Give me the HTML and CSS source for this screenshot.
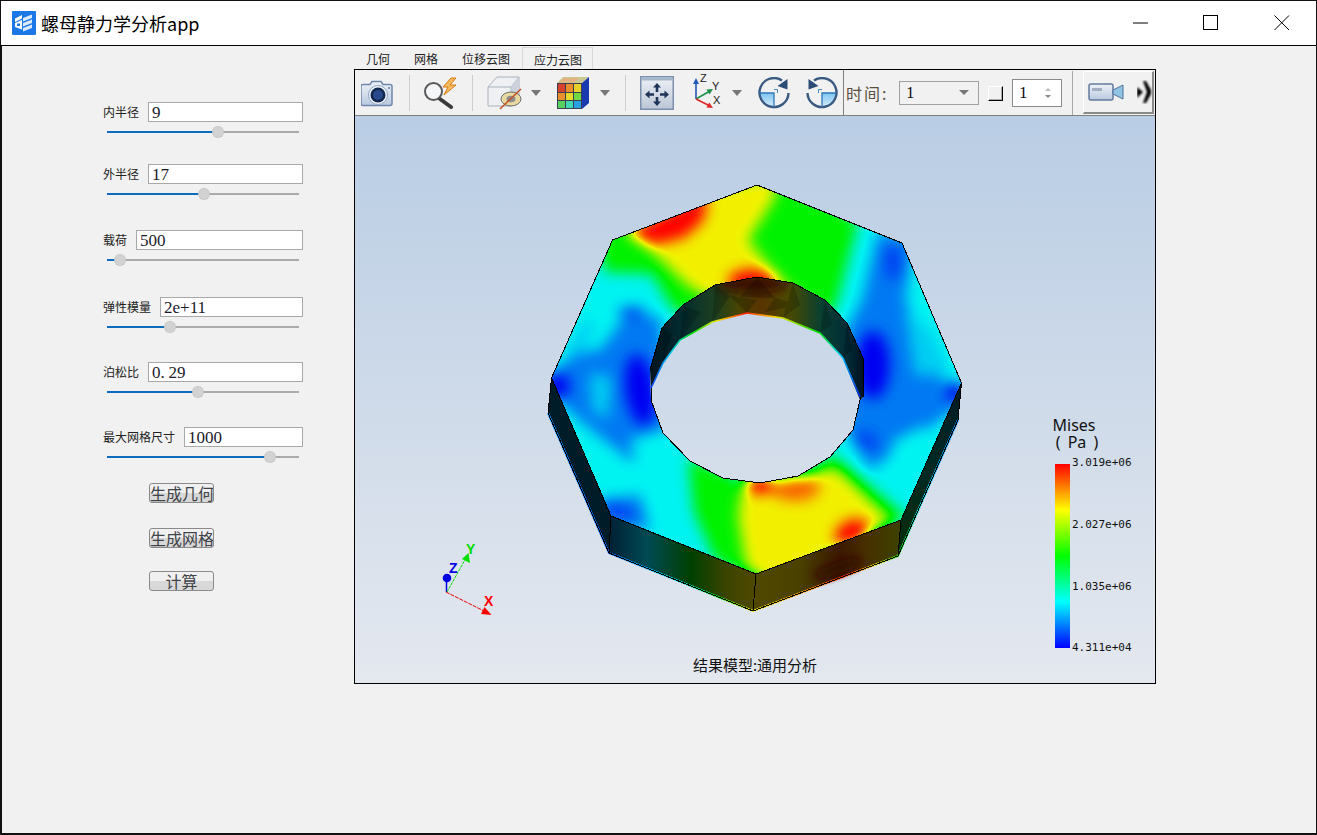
FILE: index.html
```html
<!DOCTYPE html>
<html lang="zh">
<head>
<meta charset="utf-8">
<title>螺母静力学分析app</title>
<link rel="stylesheet" href="styles.css">
</head>
<body>
<div class="window">
  <header class="titlebar">
    <svg class="app-icon" width="24" height="24" viewBox="0 0 24 24">
      <rect width="24" height="24" rx="1" fill="#1b78e6"/>
      <path d="M3 7.5 10 4v3.5L3 11z M3 12l7-3v9.5L3 16z" fill="#fff"/>
      <path d="M11 7l9-3.5V7l-9 3.5z M11 12l9-3.5V12l-9 3.5z M11 17l9-3.5V17l-9 3.5z" fill="#dbe9fb"/>
      <rect x="5" y="12.5" width="3" height="2.5" fill="#1b78e6"/>
    </svg>
    <span class="app-title">螺母静力学分析app</span>
    <div class="winctl">
      <svg width="16" height="16" viewBox="0 0 16 16"><path d="M1 8h15" stroke="#000" fill="none"/></svg>
      <svg width="16" height="16" viewBox="0 0 16 16"><rect x="0.5" y="0.5" width="14" height="14" stroke="#000" fill="none"/></svg>
      <svg width="16" height="16" viewBox="0 0 16 16"><path d="M0.5 0.5l14.5 14.5M15 0.5L0.5 15" stroke="#000" fill="none"/></svg>
    </div>
  </header>

  <main class="content">
    <aside class="params">
      <div class="param">
        <div class="param-head"><label class="param-label">内半径</label><div class="param-input">9</div></div>
        <div class="slider"><i class="fill w-111"></i><b class="thumb"></b></div>
      </div>
      <div class="param">
        <div class="param-head"><label class="param-label">外半径</label><div class="param-input">17</div></div>
        <div class="slider"><i class="fill w-97"></i><b class="thumb"></b></div>
      </div>
      <div class="param">
        <div class="param-head"><label class="param-label">载荷</label><div class="param-input">500</div></div>
        <div class="slider"><i class="fill w-13"></i><b class="thumb"></b></div>
      </div>
      <div class="param">
        <div class="param-head"><label class="param-label">弹性模量</label><div class="param-input">2e+11</div></div>
        <div class="slider"><i class="fill w-63"></i><b class="thumb"></b></div>
      </div>
      <div class="param">
        <div class="param-head"><label class="param-label">泊松比</label><div class="param-input">0<span class="wide-dot">.</span>29</div></div>
        <div class="slider"><i class="fill w-91"></i><b class="thumb"></b></div>
      </div>
      <div class="param">
        <div class="param-head"><label class="param-label">最大网格尺寸</label><div class="param-input">1000</div></div>
        <div class="slider"><i class="fill w-163"></i><b class="thumb"></b></div>
      </div>
      <div class="actions">
        <button class="act act-1">生成几何</button>
        <button class="act act-2">生成网格</button>
        <button class="act act-3">计算</button>
      </div>
    </aside>

    <section class="workspace">
      <nav class="tabs">
        <span class="tab">几何</span>
        <span class="tab">网格</span>
        <span class="tab">位移云图</span>
        <span class="tab active">应力云图</span>
      </nav>
      <div class="viewer">
        <div class="toolbar">
          <svg class="tool ml6" width="34" height="30" viewBox="0 0 34 30">
            <path d="M2.5 6.5h7l2-3h9l2 3h7q2 0 2 2v17q0 2-2 2h-27q-2 0-2-2v-17q0-2 2-2z" transform="translate(-0.5 0)" fill="url(#gCam)" stroke="#6f87ad" stroke-width="1.5"/>
            <circle cx="17" cy="17" r="9.5" fill="#eef3fa" stroke="#8ea5c6"/>
            <circle cx="17" cy="17" r="7.5" fill="#14284f"/>
            <circle cx="17" cy="17" r="5" fill="#284a8c"/>
            <circle cx="28" cy="10" r="1" fill="#5a7aa8"/>
          </svg>
          <i class="sep ml14"></i>
          <svg class="tool ml14" width="36" height="32" viewBox="0 0 36 32">
            <path d="M16 22l11 8" stroke="#3a3a3a" stroke-width="4" stroke-linecap="round"/>
            <circle cx="9.5" cy="14.5" r="8.5" fill="#f4f6f8" stroke="#5a5a5a" stroke-width="2"/>
            <path d="M27 1l-8 9h5l-4 8 12-10h-6l6-7z" fill="#f4b860" stroke="#d87d10" stroke-width="1"/>
          </svg>
          <i class="sep ml12"></i>
          <svg class="tool ml14" width="35" height="34" viewBox="0 0 35 34">
            <path d="M1 11L10 1h22v20l-8 9H1z" fill="#eef0f4" stroke="#aab2be"/>
            <path d="M1 11h23v19M24 11l8-10" fill="none" stroke="#aab2be"/>
            <path d="M24 11l8-10v20l-8 9z" fill="#ccd2dc"/>
            <ellipse cx="24" cy="23" rx="10" ry="7" fill="#e8d9a0" stroke="#6f6f6f"/>
            <ellipse cx="24" cy="23" rx="4.5" ry="3.2" fill="#8f8f8f"/>
            <path d="M13 33L34 13" stroke="#c4552d" stroke-width="1.6"/>
          </svg>
          <svg class="tool ml9" width="10" height="6" viewBox="0 0 10 6"><path d="M0 0h10L5 6z" fill="#777"/></svg>
          <svg class="tool ml15" width="34" height="34" viewBox="0 0 34 34">
            <path d="M1 7L7 1h26l-7 6z" fill="#c8c890"/>
            <path d="M3 6.500L8 2h7l-5 4.500zM11 6.500L16 2h7l-5 4.500z" fill="#e6b080"/>
            <path d="M26 7l7-6v26l-7 6z" fill="#1a3bb0"/>
            <rect x="1" y="7" width="25" height="26" fill="#3a3f55"/>
            <rect x="2" y="8" width="7" height="8" fill="#d8412c"/><rect x="10" y="8" width="7" height="8" fill="#e98c2c"/><rect x="18" y="8" width="7" height="8" fill="#e8d02c"/>
            <rect x="2" y="17" width="7" height="7" fill="#e8902c"/><rect x="10" y="17" width="7" height="7" fill="#e8d828"/><rect x="18" y="17" width="7" height="7" fill="#70d840"/>
            <rect x="2" y="25" width="7" height="7" fill="#58d060"/><rect x="10" y="25" width="7" height="7" fill="#40d8b0"/><rect x="18" y="25" width="7" height="7" fill="#28a0e0"/>
          </svg>
          <svg class="tool ml10" width="10" height="6" viewBox="0 0 10 6"><path d="M0 0h10L5 6z" fill="#777"/></svg>
          <i class="sep ml15"></i>
          <svg class="tool ml14" width="34" height="34" viewBox="0 0 34 34">
            <rect x=".75" y=".75" width="32.5" height="32.5" fill="url(#gFit)" stroke="#7c8fae" stroke-width="1.5"/>
            <rect x="1.5" y="1.5" width="31" height="3" fill="#a8b6cc"/>
            <path d="M17 7l-4 4.500h2.700v4.500h2.600v-4.500h2.700zM17 30l-4-4.500h2.700V21h2.600v4.500h2.700zM5 18.500l4.500-4v2.700H14v2.600H9.500v2.700zM29 18.500l-4.500-4v2.700H20v2.600h4.500v2.700z" fill="#1f3558"/>
          </svg>
          <svg class="tool ml18" width="30" height="38" viewBox="0 0 30 38">
            <path d="M4 25V8" stroke="#2257b8" stroke-width="1.600"/><path d="M4 4l-3 6h6z" fill="#2257b8"/>
            <path d="M4 25l14-8" stroke="#1d9048" stroke-width="1.600"/><path d="M21 15l-6.500 .5 3 5z" fill="#1d9048"/>
            <path d="M4 25l14 7" stroke="#e02828" stroke-width="1.600"/><path d="M21 34l-6.500-.5 2.800-5z" fill="#e02828"/>
            <text class="axis-mini" x="8" y="8">Z</text><text class="axis-mini" x="20" y="16">Y</text><text class="axis-mini" x="21" y="30">X</text>
          </svg>
          <svg class="tool ml10" width="10" height="6" viewBox="0 0 10 6"><path d="M0 0h10L5 6z" fill="#777"/></svg>
          <svg class="tool ml16" width="32" height="32" viewBox="0 0 32 32">
            <use href="#rot"/>
          </svg>
          <svg class="tool ml16" width="32" height="32" viewBox="0 0 32 32">
            <use href="#rot" transform="translate(32 0) scale(-1 1)"/>
          </svg>
          <i class="vsep ml5"></i>
          <span class="time-label ml2">时间:</span>
          <div class="combo ml11"><span>1</span><svg width="10" height="5" viewBox="0 0 10 5"><path d="M0 0h10L5 5z" fill="#777"/></svg></div>
          <i class="check ml9"></i>
          <div class="spin ml9"><span>1</span><svg width="8" height="12" viewBox="0 0 8 12"><path d="M1 4l3-3 3 3z" fill="#bbb"/><path d="M1 8h6l-3 3z" fill="#888"/></svg></div>
          <i class="sep sep-tall ml10"></i>
          <div class="camera-btn ml10">
            <svg width="36" height="18" viewBox="0 0 36 18">
              <rect x="1" y="1" width="24" height="16" rx="2" fill="url(#gCam)" stroke="#63799f" stroke-width="1.500"/>
              <rect x="4" y="5" width="10" height="3" fill="#a2aec2"/>
              <path d="M25 7l10-5v14l-10-5z" fill="#8fc3e4" stroke="#50709a"/>
            </svg>
            <svg class="more" width="15" height="24" viewBox="0 0 15 24">
              <g filter="url(#blurTiny)" fill="#000">
                <path d="M6 1h3l5 9v4l-5 9H6l4-11z"/>
                <path d="M0 7l6 5-6 6z"/>
              </g>
            </svg>
          </div>
        </div>
        <div class="viewport">
          <svg class="scene" width="800" height="567" viewBox="355 116 800 567">
            <defs>
              <linearGradient id="gCam" x1="0" y1="0" x2="0" y2="1"><stop offset="0" stop-color="#eef2f8"/><stop offset="1" stop-color="#b9c9df"/></linearGradient>
              <linearGradient id="gFit" x1="0" y1="0" x2="0" y2="1"><stop offset="0" stop-color="#eef1f6"/><stop offset="1" stop-color="#bcc6d7"/></linearGradient>
              <linearGradient id="gQuad" x1="0" y1="0" x2="0" y2="1"><stop offset="0" stop-color="#7cc4f0"/><stop offset="1" stop-color="#d8eefa"/></linearGradient>
              <filter id="blurTiny" x="-20%" y="-20%" width="140%" height="140%"><feGaussianBlur stdDeviation=".8"/></filter>
              <symbol id="rot" viewBox="0 0 32 32">
                <path d="M1.500 16H16V30.500A14.500 14.500 0 0 1 1.500 16z" fill="url(#gQuad)"/>
                <path d="M24 3.500A14.500 14.500 0 1 0 30.500 16" fill="none" stroke="#3a5a82" stroke-width="2.400"/>
                <path d="M1.500 16H16V30" fill="none" stroke="#2f78b8" stroke-width="1.300"/>
                <path d="M12.500 16v-0M16 12.500h3.500V16" fill="none" stroke="#4a88c0"/>
                <path d="M29.500 2v10.500l-10-3.500z" fill="#2c4c78"/>
              </symbol>
              <linearGradient id="gSideFL" gradientUnits="userSpaceOnUse" x1="611" y1="0" x2="756" y2="0">
                <stop offset="0" stop-color="#002236"/><stop offset=".25" stop-color="#004a54"/><stop offset=".55" stop-color="#004000"/><stop offset=".8" stop-color="#3c4400"/><stop offset="1" stop-color="#504800"/>
              </linearGradient>
              <linearGradient id="gSideFR" gradientUnits="userSpaceOnUse" x1="756" y1="0" x2="901" y2="0">
                <stop offset="0" stop-color="#504800"/><stop offset=".3" stop-color="#4a4000"/><stop offset=".58" stop-color="#3c1800"/><stop offset=".75" stop-color="#482e00"/><stop offset="1" stop-color="#3c4200"/>
              </linearGradient>
              <linearGradient id="gSideR" gradientUnits="userSpaceOnUse" x1="0" y1="383" x2="0" y2="556">
                <stop offset="0" stop-color="#001a24"/><stop offset=".5" stop-color="#002a24"/><stop offset="1" stop-color="#062c08"/>
              </linearGradient>
              <linearGradient id="gEdge" gradientUnits="userSpaceOnUse" x1="548" y1="0" x2="958" y2="0">
                <stop offset="0" stop-color="#0088ff"/><stop offset=".14" stop-color="#0060ff"/><stop offset=".32" stop-color="#00e0e0"/><stop offset=".42" stop-color="#00e000"/><stop offset=".5" stop-color="#f0f000"/><stop offset=".66" stop-color="#ff8000"/><stop offset=".72" stop-color="#ff2000"/><stop offset=".8" stop-color="#f0e000"/><stop offset=".86" stop-color="#00e000"/><stop offset=".9" stop-color="#00e0e0"/><stop offset="1" stop-color="#0080ff"/>
              </linearGradient>
              <linearGradient id="gWall" gradientUnits="userSpaceOnUse" x1="650" y1="0" x2="864" y2="0">
                <stop offset="0" stop-color="#001420"/><stop offset=".15" stop-color="#022c30"/><stop offset=".3" stop-color="#1c4020"/><stop offset=".42" stop-color="#4a4400"/><stop offset=".52" stop-color="#5a3400"/><stop offset=".65" stop-color="#4a4a00"/><stop offset=".8" stop-color="#084030"/><stop offset=".92" stop-color="#022c38"/><stop offset="1" stop-color="#001020"/>
              </linearGradient>
              <linearGradient id="gRim" gradientUnits="userSpaceOnUse" x1="651" y1="0" x2="860" y2="0">
                <stop offset="0" stop-color="#0040f0"/><stop offset=".1" stop-color="#00d0f0"/><stop offset=".2" stop-color="#00e000"/><stop offset=".32" stop-color="#f0e000"/><stop offset=".45" stop-color="#ff2000"/><stop offset=".6" stop-color="#f0e000"/><stop offset=".8" stop-color="#00e000"/><stop offset=".9" stop-color="#00d0f0"/><stop offset="1" stop-color="#0030f0"/>
              </linearGradient>
              <linearGradient id="gBar" x1="0" y1="0" x2="0" y2="1">
                <stop offset="0" stop-color="#ff0000"/><stop offset=".25" stop-color="#ffff00"/><stop offset=".5" stop-color="#00ff00"/><stop offset=".75" stop-color="#00ffff"/><stop offset="1" stop-color="#0000ff"/>
              </linearGradient>
              <clipPath id="faceClip">
                <path clip-rule="evenodd" d="M757 185L902 243L961.500 383L901 520L756 574L611 516L551.500 378L612.500 240Z M650 370L662 328L683 305L715 285L757 277L793 283L825 300L847 323L863 358L863 397L860 400L853 430L830 457L798 476L760 483L723 478L690 461L663 433L651 400Z"/>
              </clipPath>
              <clipPath id="wallClip">
                <path d="M650 370L662 328L683 305L715 285L757 277L793 283L825 300L847 323L863 358L863 397L860 400L843 358L820 333L783 318L747 313L712 322L680 340L663 363L651 388Z"/>
              </clipPath>
              <filter id="blur5" x="-60%" y="-60%" width="220%" height="220%"><feGaussianBlur stdDeviation="5"/></filter>
              <filter id="rainbow" filterUnits="userSpaceOnUse" x="530" y="170" width="450" height="420" color-interpolation-filters="sRGB">
                <feGaussianBlur stdDeviation="7"/>
                <feComponentTransfer>
                  <feFuncR type="table" tableValues="0 0 0 .95 1"/>
                  <feFuncG type="table" tableValues="0 .95 .95 .95 0"/>
                  <feFuncB type="table" tableValues=".95 .95 0 0 0"/>
                </feComponentTransfer>
              </filter>
            </defs>

            <!-- side faces -->
            <path d="M551.500 378L611 516L609 553L548 413Z" fill="#001c28"/>
            <path d="M961.500 383L901 520L898 556L958 420Z" fill="url(#gSideR)"/>
            <path d="M611 516L756 574L753 611L609 553Z" fill="url(#gSideFL)"/>
            <path d="M756 574L901 520L898 556L753 611Z" fill="url(#gSideFR)"/>
            <ellipse cx="838" cy="568" rx="26" ry="6" transform="rotate(-20 838 568)" fill="#300800" filter="url(#blur5)"/>
            <path d="M548 413L609 553L753 611L898 556L958 420" fill="none" stroke="url(#gEdge)" stroke-width="2"/>

            <!-- top face contour: a scalar field in grey, mapped to the rainbow by the filter -->
            <g clip-path="url(#faceClip)">
              <g filter="url(#rainbow)">
                <rect x="530" y="170" width="450" height="420" fill="#404040"/>
                <!-- azure regions -->
                <g fill="#202020">
                  <path d="M540 385L575 352L600 350L625 316L660 316L670 425L632 462L585 425Z"/>
                  <path d="M975 395L945 385L925 340L905 300L915 240L878 232L862 300L846 330L846 430L870 470L905 445L940 420Z"/>
                  <path d="M596 500L640 495L650 530L600 525Z"/>
                </g>
                <!-- cyan streaks inside the azure -->
                <g fill="#363636">
                  <path d="M566 350L585 320L596 325L578 358Z"/>
                  <path d="M590 372L612 378L608 420L592 410Z"/>
                  <path d="M905 310L930 330L950 375L915 375Z"/>
                </g>
                <g fill="#404040">
                  <path d="M895 440L925 425L905 500L880 480Z"/>
                  <path d="M630 440L680 425L700 480L650 520Z"/>
                </g>
                <!-- deep blue -->
                <g fill="#000">
                  <ellipse cx="640" cy="390" rx="15" ry="36" transform="rotate(-8 640 390)"/>
                  <ellipse cx="873" cy="365" rx="17" ry="34"/>
                  <ellipse cx="556" cy="386" rx="14" ry="13"/>
                  <ellipse cx="955" cy="392" rx="9" ry="10"/>
                </g>
                <g fill="#101010">
                  <ellipse cx="632" cy="312" rx="14" ry="5"/>
                  <ellipse cx="893" cy="262" rx="8" ry="18"/>
                  <ellipse cx="866" cy="441" rx="13" ry="8" transform="rotate(25 866 441)"/>
                  <ellipse cx="618" cy="511" rx="18" ry="7" transform="rotate(20 618 511)"/>
                </g>
                <!-- green -->
                <g fill="#808080">
                  <path d="M595 232L640 222L770 165L858 222L836 305L805 342L740 305L700 322L672 308L652 274L605 272Z"/>
                  <path d="M688 458L735 476L790 590L716 562L694 512Z"/>
                  <path d="M808 476L832 454L908 518L876 528L860 505Z"/>
                </g>
                <!-- yellow -->
                <g fill="#c0c0c0">
                  <path d="M626 226L690 192L774 176L776 196L748 240L772 270L806 304L788 322L716 302L688 286Z"/>
                  <path d="M742 490L820 470L838 470L892 522L772 590L746 566L738 516Z"/>
                </g>
                <!-- peaks -->
                <g fill="#fff">
                  <path d="M626 232L708 192L704 220L684 238L650 246Z"/>
                  <ellipse cx="752" cy="281" rx="24" ry="12"/>
                  <ellipse cx="760" cy="484" rx="16" ry="10"/>
                  <ellipse cx="852" cy="533" rx="18" ry="13" transform="rotate(-25 852 533)"/>
                </g>
                <ellipse cx="795" cy="488" rx="25" ry="13" fill="#e4e4e4"/>
              </g>
            </g>

            <!-- inner wall of the bore -->
            <path d="M650 370L662 328L683 305L715 285L757 277L793 283L825 300L847 323L863 358L863 397L860 400L843 358L820 333L783 318L747 313L712 322L680 340L663 363L651 388Z" fill="url(#gWall)"/>
            <g clip-path="url(#wallClip)">
              <ellipse cx="752" cy="284" rx="36" ry="8" fill="#3a0c00" filter="url(#blur5)"/>
              <g fill="#000" opacity=".2">
                <path d="M683 305L700 312L680 340Z"/><path d="M715 285L730 296L712 322Z"/><path d="M757 277L775 298L740 297Z"/><path d="M793 283L800 305L783 318Z"/><path d="M825 300L832 325L820 333Z"/><path d="M847 323L852 350L843 358Z"/><path d="M662 328L672 335L663 363Z"/><path d="M730 296L757 300L747 313Z"/><path d="M775 298L800 305L765 312Z"/>
              </g>
            </g>
            <path d="M651 388L663 363L680 340L712 322L747 313L783 318L820 333L843 358L860 397" fill="none" stroke="url(#gRim)" stroke-width="1.600"/>

            <!-- outlines -->
            <g fill="none" stroke="#000" shape-rendering="crispEdges">
              <path d="M757 185L902 243L961.500 383L901 520L756 574L611 516L551.500 378L612.500 240Z"/>
              <path d="M650 370L662 328L683 305L715 285L757 277L793 283L825 300L847 323L863 358L863 397"/>
              <path d="M651 388L651 400L663 433L690 461L723 478L760 483L798 476L830 457L853 430L860 400L860 397"/>
              <path d="M756 574L753 611L609 553L611 516M753 611L898 556L901 520M609 553L548 413L551.500 378M898 556L958 420L961.500 383"/>
            </g>

            <!-- axes triad -->
            <path d="M446.500 592V578" stroke="#0000e0" stroke-width="1.500"/>
            <path d="M447 592L466 558" stroke="#00e000" stroke-dasharray="3 1"/>
            <path d="M446 592L484 611" stroke="#e80000" stroke-dasharray="4 1"/>
            <circle cx="447" cy="578" r="4.300" fill="#0000e0"/>
            <path d="M468.500 553L470 563L462 559Z" fill="#00e000"/>
            <path d="M491.500 615L481 614L484.500 607Z" fill="#ff0000"/>
            <text class="axis z" x="449" y="573">Z</text>
            <text class="axis y" x="466" y="554">Y</text>
            <text class="axis x" x="484" y="606">X</text>

            <!-- legend -->
            <text class="lg-title" x="1074" y="431">Mises</text>
            <text class="lg-title lg-unit" x="1077" y="448">( Pa )</text>
            <rect x="1055" y="464" width="15" height="184" fill="url(#gBar)"/>
            <text class="lg-val" x="1072" y="466">3.019e+06</text>
            <text class="lg-val" x="1072" y="528">2.027e+06</text>
            <text class="lg-val" x="1072" y="590">1.035e+06</text>
            <text class="lg-val" x="1072" y="651">4.311e+04</text>
            <text class="model" x="755" y="671">结果模型:通用分析</text>
          </svg>
        </div>
      </div>
    </section>
  </main>
</div>
</body>
</html>
```

FILE: styles.css
```css
* { box-sizing: border-box; }
html, body { margin: 0; padding: 0; background: #fff; }
body { font-family: "Noto Sans CJK SC", "Noto Sans", sans-serif; }

.window {
  width: 1317px;
  height: 835px;
  border: 1px solid #111;
  border-bottom-width: 2px;
  display: flex;
  flex-direction: column;
  background: #f1f1f1;
}

.titlebar {
  height: 45px;
  flex: none;
  background: #fff;
  border-bottom: 1px solid #000;
  display: flex;
  align-items: center;
  padding-left: 11px;
}
.app-icon { flex: none; }
.app-title { margin-left: 5px; font-size: 18px; color: #000; line-height: 1; }
.winctl { margin-left: auto; display: flex; gap: 55px; margin-right: 26px; }

.content { flex: 1; display: flex; border-left: 1px solid #111; min-height: 0; }

.params { width: 352px; flex: none; padding: 56px 0 0 101px; }
.param { width: 200px; height: 36px; }
.param:nth-child(2) { margin-top: 26px; }
.param:nth-child(3) { margin-top: 30px; }
.param:nth-child(4) { margin-top: 31px; }
.param:nth-child(5) { margin-top: 29px; }
.param:nth-child(6) { margin-top: 29px; }
.param-head { display: flex; align-items: center; gap: 9px; height: 20px; }
.param-label { font-size: 12px; color: #222; white-space: nowrap; line-height: 20px; }
.param-input {
  flex: 1;
  height: 20px;
  border: 1px solid #a8a8a8;
  background: #fff;
  font-family: "Liberation Serif", serif;
  font-size: 17px;
  line-height: 20px;
  color: #1a1a2a;
  padding-left: 3px;
}
.wide-dot { display: inline-block; width: 8px; }
.slider {
  position: relative;
  width: 192px;
  height: 2px;
  margin: 9px 0 0 4px;
  background: #ababab;
}
.fill { display: block; height: 2px; background: #0e6cbc; }
.thumb {
  position: absolute;
  top: -5px;
  width: 12px;
  height: 12px;
  margin-left: -6px;
  border-radius: 50%;
  background: #d2d2d2;
  border: 1px dotted #bbb;
}
.w-111 { width: 111px; } .w-111 + .thumb { left: 111px; }
.w-97 { width: 97px; } .w-97 + .thumb { left: 97px; }
.w-13 { width: 13px; } .w-13 + .thumb { left: 13px; }
.w-63 { width: 63px; } .w-63 + .thumb { left: 63px; }
.w-91 { width: 91px; } .w-91 + .thumb { left: 91px; }
.w-163 { width: 163px; } .w-163 + .thumb { left: 163px; }

.actions { display: flex; flex-direction: column; margin: 20px 0 0 46px; }
.act {
  width: 65px;
  height: 20px;
  padding: 0;
  overflow: hidden;
  font-family: "Noto Sans CJK SC", sans-serif;
  font-size: 16px;
  line-height: 18px;
  color: #404448;
  border: 1px solid #8a8a8a;
  border-radius: 3px;
  white-space: nowrap;
  background: linear-gradient(#f0f0f0 0, #f0f0f0 50%, #d8d8d8 50%, #d8d8d8 100%);
}
.act-1 { margin-top: 0; }
.act-2 { margin-top: 25px; }
.act-3 { margin-top: 23px; }

.workspace { flex: none; width: 802px; display: flex; flex-direction: column; }
.tabs { height: 23px; flex: none; display: flex; align-items: flex-end; }
.tab {
  padding: 0 12px;
  height: 23px;
  line-height: 25px;
  font-size: 12px;
  color: #222;
}
.tab.active {
  height: 22px;
  line-height: 23px;
  border: 1px solid #d9d9d9;
  border-bottom: none;
  padding: 0 10px 0 11px;
}

.viewer { width: 802px; height: 615px; border: 1px solid #000; display: flex; flex-direction: column; }
.toolbar {
  height: 46px;
  flex: none;
  border-bottom: 1px solid #808080;
  background: #f1f1f1;
  display: flex;
  align-items: center;
}
.tool { flex: none; display: block; }
.sep { flex: none; width: 1px; height: 36px; background: #cdcdcd; }
.sep-tall { height: 44px; background: #a8a8a8; }
.vsep { flex: none; width: 1px; height: 45px; background: #808080; }
.ml2 { margin-left: 2px; } .ml5 { margin-left: 5px; } .ml6 { margin-left: 6px; }
.ml9 { margin-left: 9px; } .ml10 { margin-left: 10px; } .ml11 { margin-left: 11px; }
.ml12 { margin-left: 12px; } .ml14 { margin-left: 14px; } .ml15 { margin-left: 15px; }
.ml16 { margin-left: 16px; } .ml18 { margin-left: 18px; }
.axis-mini { font: 11px "Liberation Sans", sans-serif; fill: #222; }

.time-label { width: 42px; font-size: 16px; line-height: 20px; letter-spacing: 2px; color: #5a5040; white-space: nowrap; }
.combo {
  width: 80px;
  height: 24px;
  flex: none;
  border: 1px solid #a0a0a0;
  display: flex;
  align-items: center;
  justify-content: space-between;
  padding: 0 9px 0 6px;
  font-family: "Liberation Serif", serif;
  font-size: 17px;
  color: #111;
}
.check {
  flex: none;
  width: 15px;
  height: 15px;
  margin-top: 1px;
  background: #f1f1f1;
  border-top: 1px solid #fff;
  border-left: 1px solid #fff;
  border-right: 1px solid #000;
  border-bottom: 1px solid #000;
  box-shadow: inset -1px -1px 0 #aaa;
}
.spin {
  width: 50px;
  height: 28px;
  flex: none;
  border: 1px solid #8a8a8a;
  background: #fff;
  display: flex;
  align-items: center;
  justify-content: space-between;
  padding: 0 9px 0 6px;
  font-family: "Liberation Serif", serif;
  font-size: 17px;
  color: #111;
}
.camera-btn {
  flex: none;
  width: 71px;
  height: 43px;
  display: flex;
  align-items: center;
  padding-left: 4px;
  background: #f1f1f1;
  border-top: 1px solid #fff;
  border-left: 1px solid #fff;
  border-right: 2px solid #8a8a8a;
  border-bottom: 2px solid #8a8a8a;
}
.more { margin-left: 13px; flex: none; }

.viewport {
  flex: 1;
  min-height: 0;
  background: linear-gradient(#b9cde4, #e4e8ef);
}
.scene { display: block; }
.axis { font: bold 14px "Liberation Sans", sans-serif; }
.axis.z { fill: #0000e0; }
.axis.y { fill: #00e000; }
.axis.x { fill: #ff0000; }
.lg-title { font: 16px "Noto Sans", sans-serif; fill: #111; text-anchor: middle; }
.lg-unit { word-spacing: 3px; }
.lg-val { font: 11px "DejaVu Sans Mono", monospace; fill: #111; }
.model { font: 15px "Noto Sans CJK SC", sans-serif; fill: #111; text-anchor: middle; }
```
